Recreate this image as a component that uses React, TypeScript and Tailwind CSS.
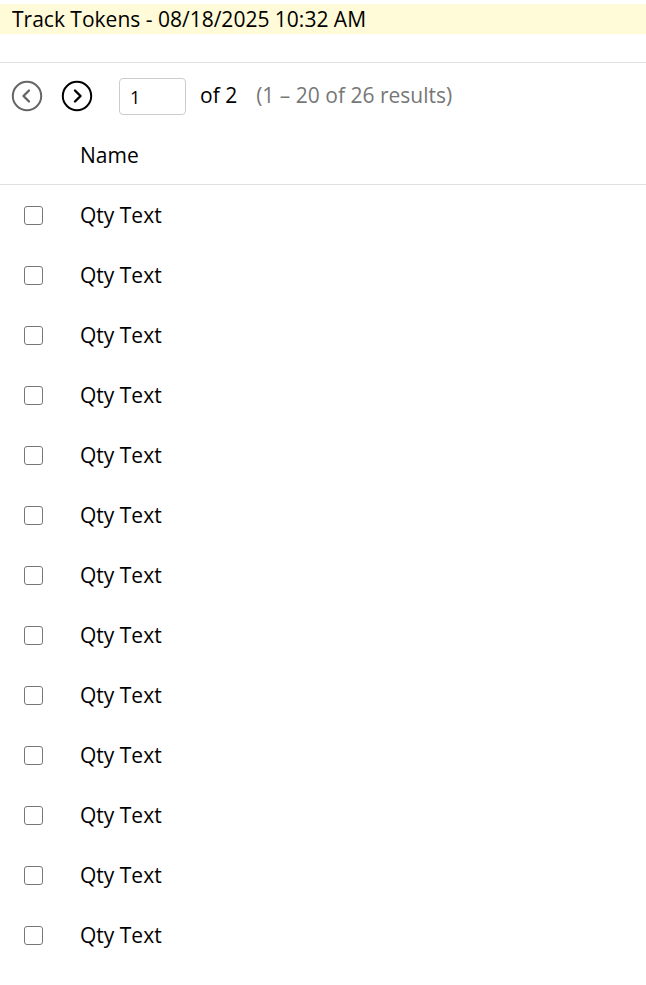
import React from "react";

function CircleChevron({ dir, color }: { dir: "left" | "right"; color: string }) {
  return (
    <svg width="32" height="32" viewBox="0 0 32 32" fill="none">
      <circle cx="16" cy="16" r="14.2" stroke={color} strokeWidth="2" />
      {dir === "left" ? (
        <path d="M18 10.5 L12.5 16 L18 21.5" stroke={color} strokeWidth="2.4" strokeLinecap="round" strokeLinejoin="round" />
      ) : (
        <path d="M14 10.5 L19.5 16 L14 21.5" stroke={color} strokeWidth="2.4" strokeLinecap="round" strokeLinejoin="round" />
      )}
    </svg>
  );
}

export default function App() {
  const rows = Array.from({ length: 13 });
  return (
    <div className="w-[646px] h-[985px] overflow-hidden bg-white text-black" style={{ fontFamily: '"Open Sans", sans-serif' }}>
      <div className="pt-[4px]">
        <div className="h-[30px] bg-[#fffbd9] pl-[12px] flex items-center text-[21px] leading-none">
          Track Tokens - 08/18/2025 10:32 AM
        </div>
      </div>
      <div className="h-[29px] border-b border-[#e0e0e0]" />
      <div className="h-[64px] mt-[1px] flex items-center pl-[11px]">
        <CircleChevron dir="left" color="#666666" />
        <div className="w-[18px]" />
        <CircleChevron dir="right" color="#000000" />
        <div className="w-[26px]" />
        <div className="w-[67px] h-[37px] border border-[#cccccc] rounded-[4px] flex items-center pl-[10px] pt-[2px] text-[18px]">1</div>
        <span className="ml-[14px] text-[21px]">of 2</span>
        <span className="ml-[19px] text-[21px] text-[#777777]">(1 – 20 of 26 results)</span>
      </div>
      <div className="h-[57px] flex items-center pl-[80px] text-[21px] border-b border-[#e0e0e0]">Name</div>
      <div>
        {rows.map((_, i) => (
          <div key={i} className="h-[60px] flex items-center pt-[1px]">
            <div className="w-[80px] flex items-center pl-[24px]">
              <div className="w-[19px] h-[19px] border-[1.5px] border-[#777777] rounded-[3px]" />
            </div>
            <span className="text-[21px]">Qty Text</span>
          </div>
        ))}
      </div>
    </div>
  );
}
